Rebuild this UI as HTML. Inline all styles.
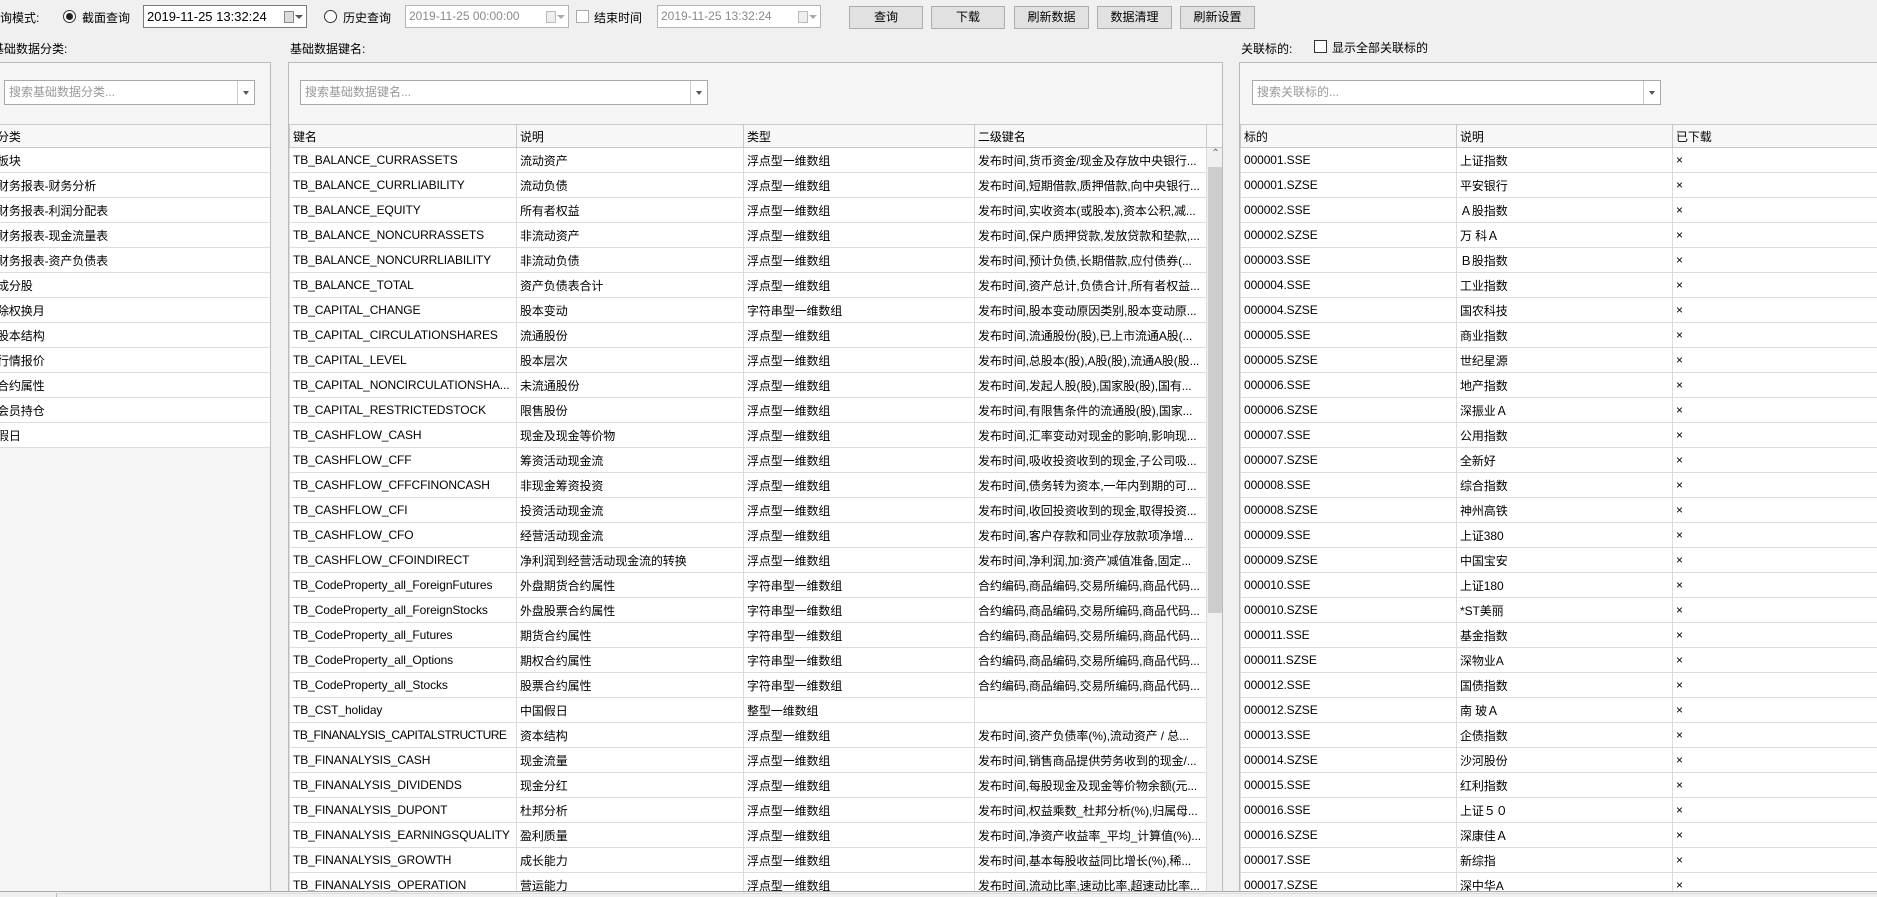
<!DOCTYPE html>
<html><head><meta charset="utf-8"><style>
*{box-sizing:border-box;margin:0;padding:0}
body{width:1877px;height:897px;overflow:hidden;background:#f0f0f0;font-family:"Liberation Sans","Noto Sans CJK SC",sans-serif;font-size:12px;color:#000;position:relative}
.a{position:absolute;white-space:nowrap}
.box{position:absolute;background:#fff;border:1px solid #7a7a7a;height:23px;line-height:21px;padding-left:3px;font-size:13px;overflow:hidden;white-space:nowrap}
.box.dis{color:#8a8a8a;border-color:#b4b4b4;font-size:12px}
.cal{position:absolute;right:5px;top:5px;width:10px;height:12px;border:1px solid #888;background:#ddd}
.arr{position:absolute;right:-2px;top:9px;width:0;height:0;border-left:4px solid transparent;border-right:4px solid transparent;border-top:4px solid #555}
.btn{position:absolute;top:6px;height:23px;border:1px solid #adadad;background:#e1e1e1;text-align:center;line-height:21px;font-size:12px}
.radio{position:absolute;width:13px;height:13px;border:1px solid #333;border-radius:50%;background:#fff}
.chk{position:absolute;width:13px;height:13px;border:1px solid #333;background:#fff}
.panel{position:absolute;top:62px;background:#f5f5f5;border:1px solid #bbb;height:830px;overflow:hidden}
.combo{position:absolute;top:80px;height:25px;background:#fff;border:1px solid #a8a8a8;color:#999;line-height:23px;padding-left:4px}
.combo i{position:absolute;right:0;top:0;width:17px;height:23px;border-left:1px solid #ccc}
.combo i:after{content:"";position:absolute;left:5px;top:10px;border-left:3.5px solid transparent;border-right:3.5px solid transparent;border-top:4px solid #555}
table{position:absolute;border-collapse:collapse;table-layout:fixed;background:#fff}
td,th{height:25px;border:1px solid #dcdcdc;padding:0 3px;white-space:nowrap;overflow:hidden;font-weight:normal;text-align:left;letter-spacing:-0.1px}
th{background:#f7f7f7;border-color:#c8c8c8;height:23px}
</style></head><body>
<div class="a" style="left:-12px;top:9px">查询模式:</div>
<div class="radio" style="left:63px;top:10px"><div style="position:absolute;left:2px;top:2px;width:7px;height:7px;border-radius:50%;background:#222"></div></div>
<div class="a" style="left:82px;top:9px">截面查询</div>
<div class="box" style="left:143px;top:5px;width:164px">2019-11-25 13:32:24<div class="cal" style="right:12px"></div><div class="arr" style="right:3px"></div></div>
<div class="radio" style="left:324px;top:10px"></div>
<div class="a" style="left:343px;top:9px">历史查询</div>
<div class="box dis" style="left:405px;top:5px;width:164px">2019-11-25 00:00:00<div class="cal" style="right:12px;border-color:#bbb;background:#eee"></div><div class="arr" style="right:3px;border-top-color:#aaa"></div></div>
<div class="chk" style="left:576px;top:10px;border-color:#aaa"></div>
<div class="a" style="left:594px;top:9px">结束时间</div>
<div class="box dis" style="left:657px;top:5px;width:164px">2019-11-25 13:32:24<div class="cal" style="right:12px;border-color:#bbb;background:#eee"></div><div class="arr" style="right:3px;border-top-color:#aaa"></div></div>
<div class="btn" style="left:849px;width:74px">查询</div>
<div class="btn" style="left:931px;width:74px">下载</div>
<div class="btn" style="left:1014px;width:75px">刷新数据</div>
<div class="btn" style="left:1097px;width:75px">数据清理</div>
<div class="btn" style="left:1180px;width:75px">刷新设置</div>

<div class="a" style="left:-8px;top:40px">基础数据分类:</div>
<div class="a" style="left:290px;top:40px">基础数据键名:</div>
<div class="a" style="left:1241px;top:40px">关联标的:</div>
<div class="chk" style="left:1314px;top:40px"></div>
<div class="a" style="left:1332px;top:39px">显示全部关联标的</div>

<div class="panel" style="left:-2px;width:273px">
<div class="combo" style="left:5px;top:17px;width:251px">搜索基础数据分类...<i></i></div>
<table style="left:0;top:61px;width:272px">
<tr><th style="text-indent:-6px">分类</th></tr>
<tr><td style="text-indent:-6px">板块</td></tr>
<tr><td style="text-indent:-6px">财务报表-财务分析</td></tr>
<tr><td style="text-indent:-6px">财务报表-利润分配表</td></tr>
<tr><td style="text-indent:-6px">财务报表-现金流量表</td></tr>
<tr><td style="text-indent:-6px">财务报表-资产负债表</td></tr>
<tr><td style="text-indent:-6px">成分股</td></tr>
<tr><td style="text-indent:-6px">除权换月</td></tr>
<tr><td style="text-indent:-6px">股本结构</td></tr>
<tr><td style="text-indent:-6px">行情报价</td></tr>
<tr><td style="text-indent:-6px">合约属性</td></tr>
<tr><td style="text-indent:-6px">会员持仓</td></tr>
<tr><td style="text-indent:-6px">假日</td></tr>
</table>
</div>

<div class="panel" style="left:288px;width:935px">
<div class="combo" style="left:11px;top:17px;width:408px">搜索基础数据键名...<i></i></div>
<table style="left:0;top:61px;width:934px">
<col style="width:227px"><col style="width:227px"><col style="width:231px"><col style="width:232px"><col style="width:17px">
<tr><th>键名</th><th>说明</th><th>类型</th><th>二级键名</th><th></th></tr>
<tr><td>TB_BALANCE_CURRASSETS</td><td>流动资产</td><td>浮点型一维数组</td><td>发布时间,货币资金/现金及存放中央银行...</td><td rowspan="30" style="background:#f0f0f0;padding:0;vertical-align:top;border:0;position:relative"><div style="position:absolute;left:1px;top:0;width:15px;height:20px;text-align:center;color:#666;font-size:10px">&#8963;</div><div style="position:absolute;left:1px;top:19px;width:15px;height:446px;background:#cdcdcd"></div></td></tr>
<tr><td>TB_BALANCE_CURRLIABILITY</td><td>流动负债</td><td>浮点型一维数组</td><td>发布时间,短期借款,质押借款,向中央银行...</td></tr>
<tr><td>TB_BALANCE_EQUITY</td><td>所有者权益</td><td>浮点型一维数组</td><td>发布时间,实收资本(或股本),资本公积,减...</td></tr>
<tr><td>TB_BALANCE_NONCURRASSETS</td><td>非流动资产</td><td>浮点型一维数组</td><td>发布时间,保户质押贷款,发放贷款和垫款,...</td></tr>
<tr><td>TB_BALANCE_NONCURRLIABILITY</td><td>非流动负债</td><td>浮点型一维数组</td><td>发布时间,预计负债,长期借款,应付债券(...</td></tr>
<tr><td>TB_BALANCE_TOTAL</td><td>资产负债表合计</td><td>浮点型一维数组</td><td>发布时间,资产总计,负债合计,所有者权益...</td></tr>
<tr><td>TB_CAPITAL_CHANGE</td><td>股本变动</td><td>字符串型一维数组</td><td>发布时间,股本变动原因类别,股本变动原...</td></tr>
<tr><td>TB_CAPITAL_CIRCULATIONSHARES</td><td>流通股份</td><td>浮点型一维数组</td><td>发布时间,流通股份(股),已上市流通A股(...</td></tr>
<tr><td>TB_CAPITAL_LEVEL</td><td>股本层次</td><td>浮点型一维数组</td><td>发布时间,总股本(股),A股(股),流通A股(股...</td></tr>
<tr><td>TB_CAPITAL_NONCIRCULATIONSHA...</td><td>未流通股份</td><td>浮点型一维数组</td><td>发布时间,发起人股(股),国家股(股),国有...</td></tr>
<tr><td>TB_CAPITAL_RESTRICTEDSTOCK</td><td>限售股份</td><td>浮点型一维数组</td><td>发布时间,有限售条件的流通股(股),国家...</td></tr>
<tr><td>TB_CASHFLOW_CASH</td><td>现金及现金等价物</td><td>浮点型一维数组</td><td>发布时间,汇率变动对现金的影响,影响现...</td></tr>
<tr><td>TB_CASHFLOW_CFF</td><td>筹资活动现金流</td><td>浮点型一维数组</td><td>发布时间,吸收投资收到的现金,子公司吸...</td></tr>
<tr><td>TB_CASHFLOW_CFFCFINONCASH</td><td>非现金筹资投资</td><td>浮点型一维数组</td><td>发布时间,债务转为资本,一年内到期的可...</td></tr>
<tr><td>TB_CASHFLOW_CFI</td><td>投资活动现金流</td><td>浮点型一维数组</td><td>发布时间,收回投资收到的现金,取得投资...</td></tr>
<tr><td>TB_CASHFLOW_CFO</td><td>经营活动现金流</td><td>浮点型一维数组</td><td>发布时间,客户存款和同业存放款项净增...</td></tr>
<tr><td>TB_CASHFLOW_CFOINDIRECT</td><td>净利润到经营活动现金流的转换</td><td>浮点型一维数组</td><td>发布时间,净利润,加:资产减值准备,固定...</td></tr>
<tr><td>TB_CodeProperty_all_ForeignFutures</td><td>外盘期货合约属性</td><td>字符串型一维数组</td><td>合约编码,商品编码,交易所编码,商品代码...</td></tr>
<tr><td>TB_CodeProperty_all_ForeignStocks</td><td>外盘股票合约属性</td><td>字符串型一维数组</td><td>合约编码,商品编码,交易所编码,商品代码...</td></tr>
<tr><td>TB_CodeProperty_all_Futures</td><td>期货合约属性</td><td>字符串型一维数组</td><td>合约编码,商品编码,交易所编码,商品代码...</td></tr>
<tr><td>TB_CodeProperty_all_Options</td><td>期权合约属性</td><td>字符串型一维数组</td><td>合约编码,商品编码,交易所编码,商品代码...</td></tr>
<tr><td>TB_CodeProperty_all_Stocks</td><td>股票合约属性</td><td>字符串型一维数组</td><td>合约编码,商品编码,交易所编码,商品代码...</td></tr>
<tr><td>TB_CST_holiday</td><td>中国假日</td><td>整型一维数组</td><td></td></tr>
<tr><td style="letter-spacing:-0.5px">TB_FINANALYSIS_CAPITALSTRUCTURE</td><td>资本结构</td><td>浮点型一维数组</td><td>发布时间,资产负债率(%),流动资产 / 总...</td></tr>
<tr><td>TB_FINANALYSIS_CASH</td><td>现金流量</td><td>浮点型一维数组</td><td>发布时间,销售商品提供劳务收到的现金/...</td></tr>
<tr><td>TB_FINANALYSIS_DIVIDENDS</td><td>现金分红</td><td>浮点型一维数组</td><td>发布时间,每股现金及现金等价物余额(元...</td></tr>
<tr><td>TB_FINANALYSIS_DUPONT</td><td>杜邦分析</td><td>浮点型一维数组</td><td>发布时间,权益乘数_杜邦分析(%),归属母...</td></tr>
<tr><td>TB_FINANALYSIS_EARNINGSQUALITY</td><td>盈利质量</td><td>浮点型一维数组</td><td>发布时间,净资产收益率_平均_计算值(%)...</td></tr>
<tr><td>TB_FINANALYSIS_GROWTH</td><td>成长能力</td><td>浮点型一维数组</td><td>发布时间,基本每股收益同比增长(%),稀...</td></tr>
<tr><td>TB_FINANALYSIS_OPERATION</td><td>营运能力</td><td>浮点型一维数组</td><td>发布时间,流动比率,速动比率,超速动比率...</td></tr>
</table>
</div>

<div class="panel" style="left:1239px;width:640px">
<div class="combo" style="left:12px;top:17px;width:409px">搜索关联标的...<i></i></div>
<table style="left:0;top:61px;width:640px">
<col style="width:216px"><col style="width:216px"><col style="width:208px">
<tr><th>标的</th><th>说明</th><th>已下载</th></tr>
<tr><td>000001.SSE</td><td>上证指数</td><td>×</td></tr>
<tr><td>000001.SZSE</td><td>平安银行</td><td>×</td></tr>
<tr><td>000002.SSE</td><td>Ａ股指数</td><td>×</td></tr>
<tr><td>000002.SZSE</td><td>万 科Ａ</td><td>×</td></tr>
<tr><td>000003.SSE</td><td>Ｂ股指数</td><td>×</td></tr>
<tr><td>000004.SSE</td><td>工业指数</td><td>×</td></tr>
<tr><td>000004.SZSE</td><td>国农科技</td><td>×</td></tr>
<tr><td>000005.SSE</td><td>商业指数</td><td>×</td></tr>
<tr><td>000005.SZSE</td><td>世纪星源</td><td>×</td></tr>
<tr><td>000006.SSE</td><td>地产指数</td><td>×</td></tr>
<tr><td>000006.SZSE</td><td>深振业Ａ</td><td>×</td></tr>
<tr><td>000007.SSE</td><td>公用指数</td><td>×</td></tr>
<tr><td>000007.SZSE</td><td>全新好</td><td>×</td></tr>
<tr><td>000008.SSE</td><td>综合指数</td><td>×</td></tr>
<tr><td>000008.SZSE</td><td>神州高铁</td><td>×</td></tr>
<tr><td>000009.SSE</td><td>上证380</td><td>×</td></tr>
<tr><td>000009.SZSE</td><td>中国宝安</td><td>×</td></tr>
<tr><td>000010.SSE</td><td>上证180</td><td>×</td></tr>
<tr><td>000010.SZSE</td><td>*ST美丽</td><td>×</td></tr>
<tr><td>000011.SSE</td><td>基金指数</td><td>×</td></tr>
<tr><td>000011.SZSE</td><td>深物业A</td><td>×</td></tr>
<tr><td>000012.SSE</td><td>国债指数</td><td>×</td></tr>
<tr><td>000012.SZSE</td><td>南 玻Ａ</td><td>×</td></tr>
<tr><td>000013.SSE</td><td>企债指数</td><td>×</td></tr>
<tr><td>000014.SZSE</td><td>沙河股份</td><td>×</td></tr>
<tr><td>000015.SSE</td><td>红利指数</td><td>×</td></tr>
<tr><td>000016.SSE</td><td>上证５０</td><td>×</td></tr>
<tr><td>000016.SZSE</td><td>深康佳Ａ</td><td>×</td></tr>
<tr><td>000017.SSE</td><td>新综指</td><td>×</td></tr>
<tr><td>000017.SZSE</td><td>深中华A</td><td>×</td></tr>
</table>
</div>
<div style="position:absolute;left:0;top:891px;width:1877px;height:6px;background:#f0f0f0;border-top:1px solid #aaa"></div>
<div style="position:absolute;left:56px;top:893px;width:1821px;height:4px;border-left:1px solid #bbb;border-top:1px solid #ddd"></div>
</body></html>
